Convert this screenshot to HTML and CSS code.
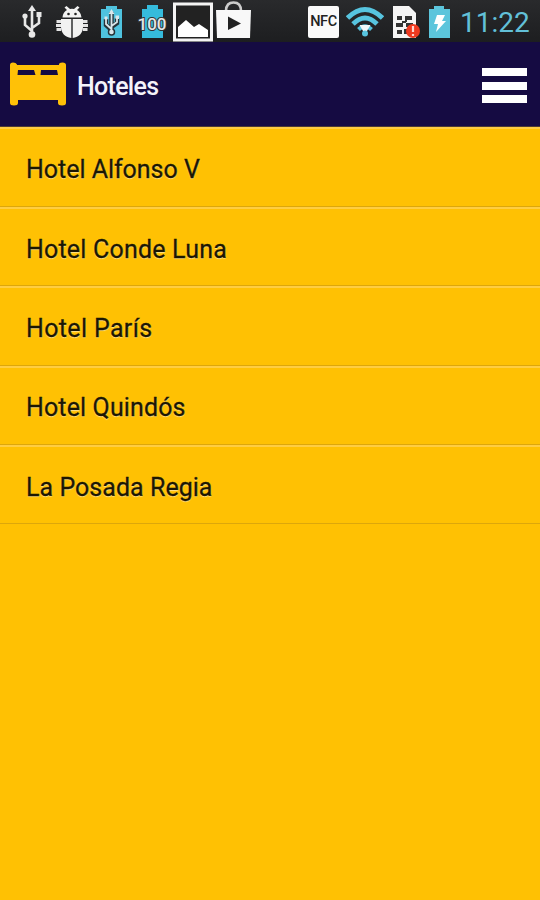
FILE: index.html
```html
<!DOCTYPE html>
<html lang="es">
<head>
    <meta charset="UTF-8">
    <title>Hoteles</title>
    <link rel="stylesheet" href="styles.css">
</head>
<body>
    <div class="status-bar">
        <div class="notifications">
            <svg class="usb" width="20" height="42" viewBox="0 0 20 42" fill="none" stroke="#e8e8e8" stroke-width="2">
                <path d="M10 9V35M10 31L3 25V17M10 28L17 23V15" stroke-width="2.6"/>
                <path d="M10 5l4 6H6z" fill="#e8e8e8" stroke="none"/>
                <circle cx="3" cy="16" r="2.6" fill="#e8e8e8" stroke="none"/>
                <path d="M14.5 12h5v5h-5z" fill="#e8e8e8" stroke="none"/>
                <circle cx="10" cy="34.5" r="3.3" fill="#e8e8e8" stroke="none"/>
            </svg>
            <svg class="bug" width="32" height="42" viewBox="0 0 32 42" fill="#f2f2f2">
                <path d="M6.5 17.500C7 13 9 11 11 10L8.500 7.500l2-1.500L14 9q2-.6 4 0l3.500-3 2 1.500L21 10c2 1 4 3 4.500 7.500z"/>
                <path d="M5 19h10.300v19C9 37 5 33 5 27zM16.700 19H27v8c0 6-4 10-10.300 11z"/>
                <path d="M5 21.500H.5M5 25.500H0M5 29.500H.5M27 21.500h4.500M27 25.500h5M27 29.500h4.500" stroke="#e4e4e4" stroke-width="3"/>
                <circle cx="12.500" cy="14" r="1.300" fill="#222"/>
                <circle cx="19.500" cy="14" r="1.300" fill="#222"/>
            </svg>
            <svg class="battery-usb" width="21" height="42" viewBox="0 0 21 42">
                <path d="M0 9h5V6h11v3h5v29H0z" fill="#4fc3df"/>
                <g fill="none" stroke="#263338" stroke-width="4.500"><path d="M10.500 12v21M10.500 30L5 25v-6M10.500 27l5.500-4v-5"/><circle cx="10.500" cy="32" r="1.500"/></g>
                <path d="M10.500 12v20M10.500 29L5 24v-6M10.500 26l5.500-4v-5" fill="none" stroke="#d9e6ea" stroke-width="1.800"/>
                <path d="M10.500 9l3 5h-6zM3.500 16.500h3v3h-3zM14.500 15.500h3.500V19h-3.500z" fill="#d9e6ea"/>
                <circle cx="10.500" cy="32" r="2.300" fill="#d9e6ea"/>
            </svg>
            <svg class="battery-level" width="36" height="42" viewBox="0 0 36 42">
                <path d="M8 9h5V5h11v4h5v29H8z" fill="#35bbdc"/>
                <text x="18" y="29.500" text-anchor="middle">100</text>
            </svg>
            <svg class="picture" width="40" height="42" viewBox="0 0 40 42">
                <path d="M1.500 4h37v36h-37z" fill="#222" stroke="#f4f4f4" stroke-width="3"/>
                <path d="M5 37V27l8-7 8 7 5-3 9 6v7z" fill="#fff"/>
            </svg>
            <svg class="bag" width="35" height="42" viewBox="0 0 35 42">
                <path d="M10 11C10 5 13 2.500 17.500 2.500S25 5 25 11" fill="none" stroke="#ccc" stroke-width="2.600"/>
                <path d="M0 10h35l-1 28H1z" fill="#f8f8f8"/>
                <path d="M12 16.500L25 23.500 12 30z" fill="#222"/>
            </svg>
        </div>
        <div class="system">
            <div class="nfc">NFC</div>
            <svg class="wifi" width="38" height="42" viewBox="0 0 38 42" fill="none" stroke="#57c4df" stroke-width="4.800">
                <path d="M1.500 18Q19 1 36.500 18"/>
                <path d="M7 24Q19 12 31 24"/>
                <path d="M12.500 29.500Q19 23 25.500 29.500" stroke-width="4"/>
                <path d="M13.500 25h11L21 31h-4z" fill="#f1f7f8" stroke="none"/>
                <circle cx="19" cy="33.500" r="3" fill="#57c4df" stroke="none"/>
            </svg>
            <svg class="sim" width="28" height="42" viewBox="0 0 28 42">
                <path d="M1 6h16l7 7v25H1z" fill="#f5f5f5"/>
                <path d="M5 16h5v4H5zM13 16h7v4h-5v2h-2zM4 23h7v4H4zM14 23h7v4h-7zM5 30h5v4H5zM12 29h4v5h-4zM10 21h4v2h-4z" fill="#333"/>
                <circle cx="21" cy="31" r="7" fill="#f03a20"/>
                <path d="M21 26v6M21 34v2" stroke="#ffd5cf" stroke-width="2.200"/>
            </svg>
            <svg class="charging" width="21" height="42" viewBox="0 0 21 42">
                <path d="M0 9h5V6h10v3h6v29H0z" fill="#5cc5dc"/>
                <path d="M8 15h8l-3 6h4L7 32l2-8H5z" fill="#fff"/>
            </svg>
            <span class="clock">11:22</span>
        </div>
    </div>

    <header class="header">
        <svg class="bed" width="56" height="46" viewBox="0 0 56 46">
            <path d="M0 4Q0 1.500 3 1.500t4 2V4h42v-.5q0-2 3.500-2T56 4v38q0 2.500-4 2.500T48 42v-3H8v3q0 2.500-4 2.500T0 42z" fill="#ffc107"/>
            <path d="M8 9h16l1.500 5H7.500zM31 9h16l1 5H30.500z" fill="#150b42"/>
        </svg>
        <h1>Hoteles</h1>
        <div class="menu">
            <span></span>
            <span></span>
            <span></span>
        </div>
    </header>

    <ul class="hotels">
        <li class="alfonso">Hotel Alfonso V</li>
        <li class="conde">Hotel Conde Luna</li>
        <li class="paris">Hotel París</li>
        <li class="quindos">Hotel Quindós</li>
        <li class="posada">La Posada Regia</li>
    </ul>
</body>
</html>
```

FILE: styles.css
```css
* {
    box-sizing: border-box;
}
body {
    margin: 0;
    height: 900px;
    overflow: hidden;
    background: #ffc103;
    font-family: Roboto, "Liberation Sans", sans-serif;
}
.status-bar {
    display: flex;
    justify-content: space-between;
    height: 42px;
    padding: 0 11px 0 22px;
    background: linear-gradient(#292a2c, #1d1e20);
}
.notifications,
.system {
    display: flex;
}
.bug {
    margin-left: 14px;
}
.battery-usb {
    margin-left: 13px;
}
.battery-level {
    margin-left: 12px;
}
.battery-level text {
    font-size: 17px;
    font-weight: 500;
    fill: #e6e6e6;
    stroke: #333;
    stroke-width: 2px;
    paint-order: stroke;
}
.picture {
    margin-left: 3px;
}
.bag {
    margin-left: 3px;
}
.nfc {
    width: 31px;
    height: 32px;
    margin-top: 6px;
    border-radius: 2px;
    background: #fafafa;
    color: #222;
    font-size: 14.5px;
    font-weight: 500;
    line-height: 32px;
    text-align: center;
    letter-spacing: -0.4px;
}
.wifi {
    margin-left: 7px;
}
.sim {
    margin-left: 8px;
}
.charging {
    margin-left: 9px;
}
.clock {
    width: 69px;
    margin-left: 10px;
    font-size: 28px;
    line-height: 45px;
    color: #62c0d8;
    white-space: nowrap;
}
.header {
    display: flex;
    align-items: center;
    height: 85px;
    padding: 0 13px 0 10px;
    background: #150b42;
    border-bottom: 1px solid #4b3a36;
}
.header h1 {
    margin: 5px 0 0 11px;
    font-size: 25px;
    font-weight: 500;
    line-height: 32px;
    letter-spacing: -0.7px;
    color: #f4f3fa;
}
.menu {
    display: grid;
    gap: 5.5px;
    width: 45px;
    margin: 3px 0 0 auto;
}
.menu span {
    height: 8px;
    background: #fff;
}
.hotels {
    margin: 0;
    padding: 0;
    list-style: none;
}
.hotels li {
    display: flex;
    align-items: center;
    height: 79.3px;
    padding: 4px 26px 0;
    border-top: 2px solid #ffcd42;
    border-bottom: 1px solid #dda70b;
    font-size: 25px;
    color: #1c1703;
    text-shadow: 0 1px 1px #ffe08a;
    -webkit-text-stroke: 0.3px #1c1703;
}
.hotels li:first-child {
    height: 80px;
}
.alfonso {
    letter-spacing: -0.03px;
}
.conde {
    letter-spacing: 0.2px;
}
.paris {
    letter-spacing: 0.35px;
}
.quindos {
    letter-spacing: 0.13px;
}
.posada {
    letter-spacing: 0.04px;
}
```
